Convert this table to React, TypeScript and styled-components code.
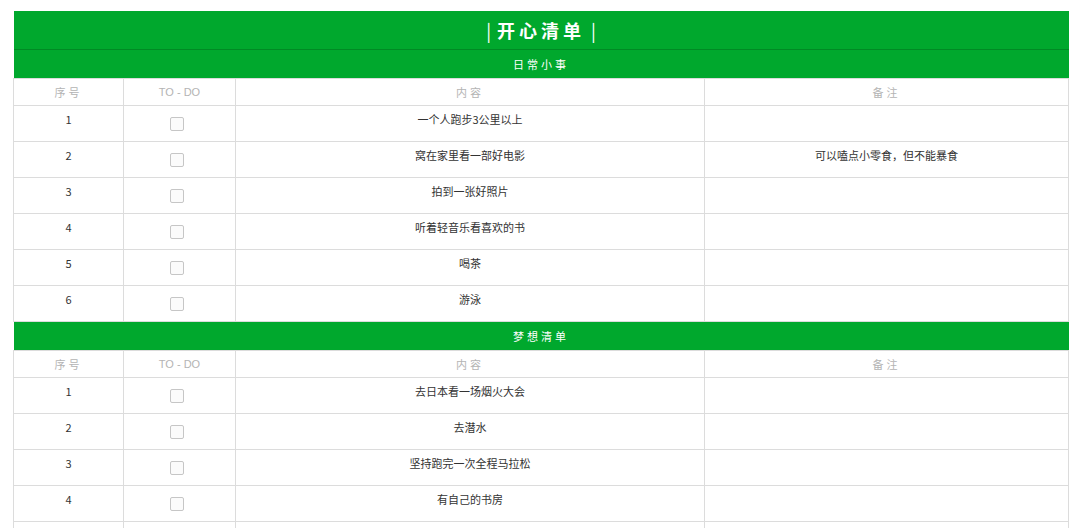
import React from 'react'
import styled, { createGlobalStyle } from 'styled-components'

type Item = { text: string; note?: string }

const daily: Item[] = [
  { text: '一个人跑步3公里以上' },
  { text: '窝在家里看一部好电影', note: '可以嗑点小零食，但不能暴食' },
  { text: '拍到一张好照片' },
  { text: '听着轻音乐看喜欢的书' },
  { text: '喝茶' },
  { text: '游泳' },
]

const dreams: Item[] = [
  { text: '去日本看一场烟火大会' },
  { text: '去潜水' },
  { text: '坚持跑完一次全程马拉松' },
  { text: '有自己的书房' },
]

const Section = ({
  title,
  items,
  open,
}: {
  title: string
  items: Item[]
  open?: boolean
}) => (
  <>
    <tr>
      <SubTitle colSpan={4}>{title}</SubTitle>
    </tr>
    <tr>
      <HeadCell>序号</HeadCell>
      <HeadCell $tight>TO - DO</HeadCell>
      <HeadCell>内容</HeadCell>
      <HeadCell>备注</HeadCell>
    </tr>
    {items.map((item, i) => (
      <tr key={item.text}>
        <Cell>{i + 1}</Cell>
        <Cell>
          <CheckBox />
        </Cell>
        <Cell>{item.text}</Cell>
        <Cell>{item.note}</Cell>
      </tr>
    ))}
    {open && (
      <tr>
        <Cell />
        <Cell />
        <Cell />
        <Cell />
      </tr>
    )}
  </>
)

const App = () => {
  return (
    <>
      <GlobalStyle />
      <Table>
        <colgroup>
          <col style={{ width: 110 }} />
          <col style={{ width: 112 }} />
          <col style={{ width: 469 }} />
          <col style={{ width: 364 }} />
        </colgroup>
        <tbody>
          <tr>
            <Title colSpan={4}>
              <Bar>|</Bar>开心清单<Bar>|</Bar>
            </Title>
          </tr>
          <Section title='日常小事' items={daily} />
          <Section title='梦想清单' items={dreams} open />
        </tbody>
      </Table>
    </>
  )
}

export default App

const GlobalStyle = createGlobalStyle`
  body {
    margin: 0;
    padding: 11px 12px 0 13px;
    background: #ffffff;
    font-family: "Noto Sans CJK SC", "Noto Sans", sans-serif;
  }
`

const Table = styled.table`
  width: 1055px;
  border-collapse: collapse;
  table-layout: fixed;
`

const Title = styled.td`
  height: 38px;
  padding: 0;
  background: #00a82d;
  border-bottom: 1px solid #008a24;
  color: #ffffff;
  font-size: 18px;
  font-weight: 700;
  letter-spacing: 4px;
  text-align: center;
  line-height: 38px;
`

const Bar = styled.span`
  font-weight: 400;
  letter-spacing: 0;
  margin: 0 6px;
`

const SubTitle = styled.td`
  height: 28px;
  padding: 0;
  background: #00a82d;
  color: #ffffff;
  font-size: 11px;
  letter-spacing: 3px;
  text-align: center;
  line-height: 26px;
`

const HeadCell = styled.td<{ $tight?: boolean }>`
  height: 27px;
  padding: 0;
  box-sizing: border-box;
  border: 1px solid #dcdcdc;
  color: #b4b4b4;
  font-family: ${({ $tight }) =>
    $tight ? '"Liberation Sans", "Noto Sans", sans-serif' : '"Noto Sans CJK SC", sans-serif'};
  font-size: 11px;
  letter-spacing: ${({ $tight }) => ($tight ? '0' : '3px')};
  text-align: center;
  line-height: 24px;
`

const Cell = styled.td`
  height: 36px;
  padding: 6px 0 0;
  box-sizing: border-box;
  border: 1px solid #dcdcdc;
  color: #333333;
  font-size: 11px;
  line-height: 14px;
  text-align: center;
  vertical-align: top;
`

const CheckBox = styled.span`
  display: inline-block;
  width: 12px;
  height: 12px;
  margin-top: 5px;
  margin-right: 6px;
  border: 1px solid #c6c6c6;
  border-radius: 2px;
  background: #fbfbfb;
`
